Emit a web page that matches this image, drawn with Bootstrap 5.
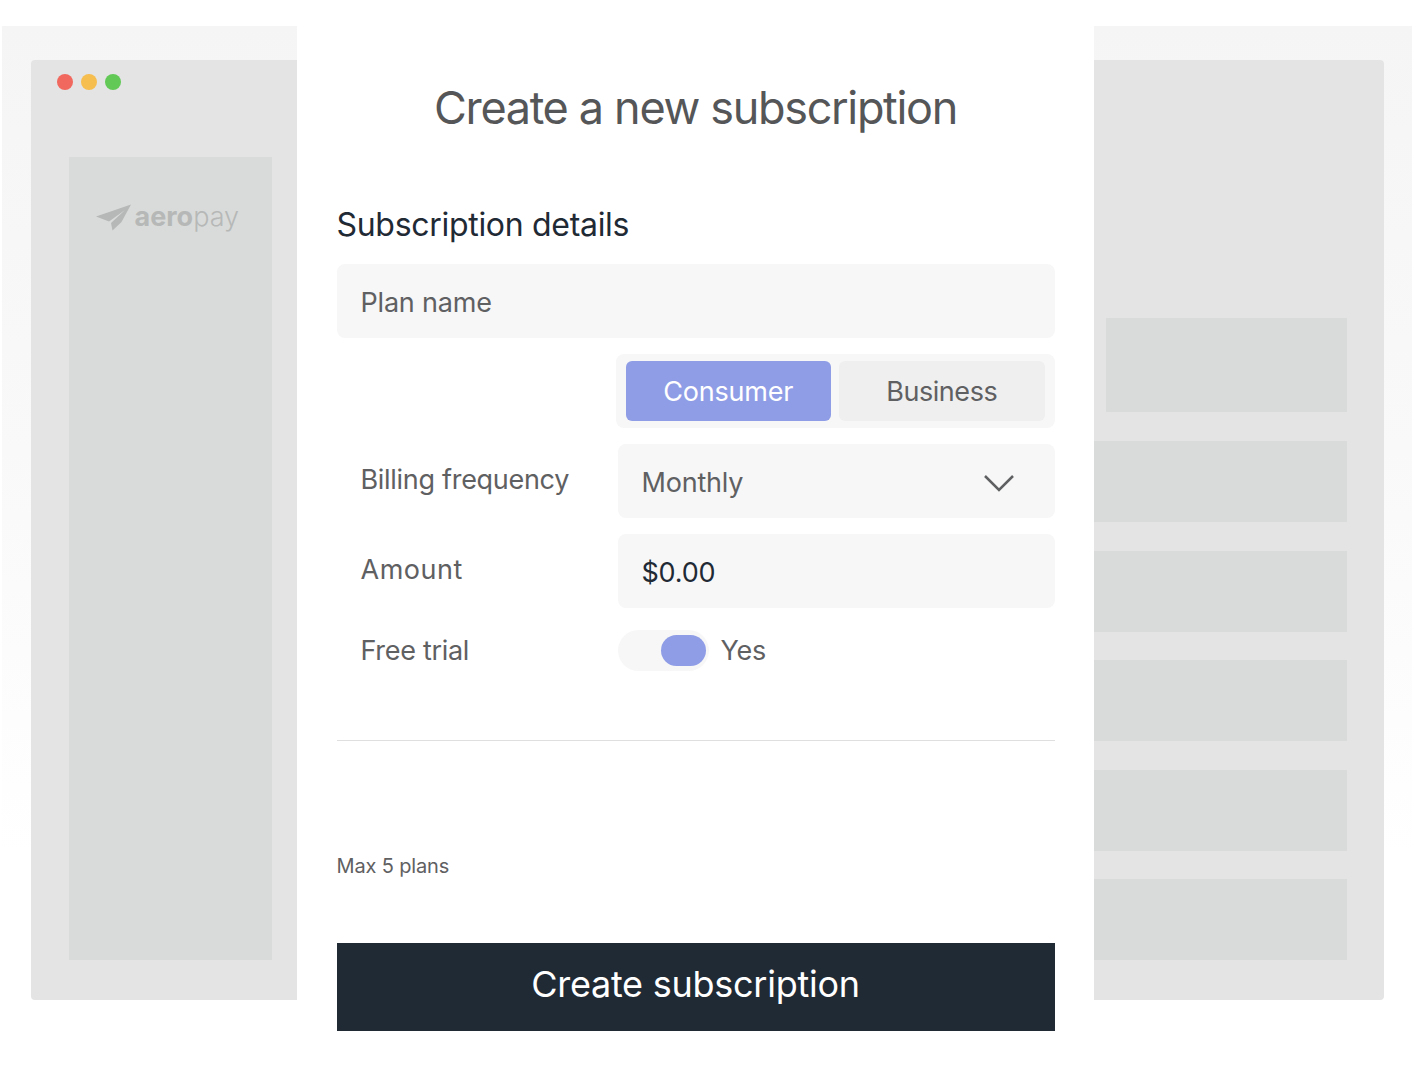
<!DOCTYPE html>
<html lang="en">
<head>
    <meta charset="UTF-8">
    <meta name="viewport" content="width=device-width, initial-scale=1.0">
    <title>Create a new subscription</title>
    <link href="https://cdn.jsdelivr.net/npm/bootstrap@5.3.0/dist/css/bootstrap.min.css" rel="stylesheet">
    <style>
        body {
            background-color: #fff;
            height: 1087px;
            overflow: hidden;
            font-family: "Inter", "Liberation Sans", sans-serif;
            color: #5f6062;
        }
        .side-left, .side-right {
            margin-top: 26px;
            padding-top: 34px;
            height: 1061px;
            background: linear-gradient(#f5f5f5, #f9f9f9 40%, #fff 78%);
        }
        .side-left { margin-left: 2px; width: 295px; padding-left: 29px; }
        .side-right { width: 318px; padding-right: 28px; }
        .win-left, .win-right { height: 940px; background-color: #e4e4e4; }
        .win-left { border-radius: 4px 0 0 4px; padding: 14px 25px 0 37.5px; position: relative; }
        .win-right { border-radius: 0 4px 4px 0; padding: 258px 37px 0 0; }
        .win-dots { position: absolute; left: 26px; top: 14px; }
        .win-dot { width: 16px; height: 16px; border-radius: 50%; }
        .sidebar-block {
            margin-top: 83px;
            height: 803px;
            background-color: #d9dbda;
            padding: 47px 0 0 27px;
        }
        .brand-word { font-size: 27px; line-height: 26px; color: #b6b8b7; letter-spacing: 0; margin-left: 3px; }
        .brand-word b { font-weight: 700; }
        .brand-word span { font-weight: 300; }
        .ghost-row { background-color: #d9dbda; height: 81px; margin-bottom: 28.5px; }
        .ghost-first { height: 94px; margin-left: 12px; margin-bottom: 29px; }
        .modal-panel { width: 797px; padding: 80px 39.5px 0; background-color: #fff; }
        .page-title { font-size: 45px; line-height: 55px; font-weight: 400; color: #555658; letter-spacing: -1.33px; margin: 0 0 70px; }
        .section-title { font-size: 32px; line-height: 40px; font-weight: 400; color: #1f2a35; letter-spacing: -.3px; margin: 0 0 19px; }
        .field-box.form-control {
            height: 74px;
            background-color: #f7f7f7;
            border: 0;
            border-radius: 8px;
            padding: 2px 24px 0;
            font-size: 27px;
            color: #5f6062;
            letter-spacing: -.2px;
        }
        .field-box.form-control::placeholder { color: #5f6062; opacity: 1; }
        .field-box.field-dark { color: #1f2a35; }
        .field-box.field-pick { padding-top: 4px; }
        .pick-arrow { margin-right: 16px; }
        .field-label { width: 281px; padding-left: 24px; font-size: 27px; letter-spacing: -.3px; line-height: 36px; flex-shrink: 0; }
        .label-raise { padding-bottom: 2px; }
        .label-wide { letter-spacing: .5px; }
        .seg-group { width: 439px; height: 74px; margin: 16px 0 16px auto; padding: 7px 10px; background-color: #f7f7f7; border-radius: 8px; }
        .seg-btn.btn { flex: 1; height: 60px; border: 0; border-radius: 6px; font-size: 27px; letter-spacing: -.2px; padding: 2px 0 0; }
        .seg-on.btn { background-color: #8f9de6; color: #fff; }
        .seg-off.btn { background-color: #efefef; color: #5f6062; letter-spacing: -.45px; }
        .trial-row { margin-top: 22px; }
        .pill-track { width: 91px; height: 41px; border-radius: 21px; background-color: #f7f7f7; padding: 5px 3px; }
        .pill-knob { width: 45px; height: 31px; border-radius: 16px; background-color: #8f9de6; }
        .rule-line { margin: 69px 0 0; border: 0; border-top: 1px solid #dfdfdf; opacity: 1; }
        .plan-note { font-size: 20px; line-height: 28px; letter-spacing: -.15px; margin: 111px 0 63px; }
        .create-btn.btn { height: 88px; background-color: #1f2a35; color: #fff; border: 0; font-size: 36px; letter-spacing: -.25px; padding: 0 0 6px; }
    </style>
</head>
<body>
    <div class="d-flex">
        <div class="side-left">
            <div class="win-left">
                <div class="win-dots d-flex gap-2">
                    <div class="win-dot" style="background-color:#f1685e"></div>
                    <div class="win-dot" style="background-color:#f6bd4f"></div>
                    <div class="win-dot" style="background-color:#62c956"></div>
                </div>
                <div class="sidebar-block">
                    <div class="d-flex align-items-start">
                        <svg width="36" height="27" viewBox="0 0 36 27" class="flex-shrink-0">
                            <path fill="#b6b8b7" d="M35 .5 0 12.500l13 5L29 6 15 19l1.500 7.500 9-8.500z"/>
                        </svg>
                        <div class="brand-word"><b>aero</b><span>pay</span></div>
                    </div>
                </div>
            </div>
        </div>

        <div class="modal-panel">
            <h1 class="page-title text-center">Create a new subscription</h1>
            <h2 class="section-title">Subscription details</h2>
            <form>
                <input type="text" class="form-control field-box" placeholder="Plan name">
                <div class="seg-group d-flex gap-2">
                    <button type="button" class="btn seg-btn seg-on">Consumer</button>
                    <button type="button" class="btn seg-btn seg-off">Business</button>
                </div>
                <div class="d-flex align-items-center mb-3">
                    <div class="field-label label-raise">Billing frequency</div>
                    <div class="form-control field-box field-pick d-flex align-items-center justify-content-between">
                        <span>Monthly</span>
                        <svg width="32" height="18" viewBox="0 0 32 18" class="pick-arrow">
                            <path d="M2 2l14 14L30 2" fill="none" stroke="#5f6062" stroke-width="2.500"/>
                        </svg>
                    </div>
                </div>
                <div class="d-flex align-items-center">
                    <div class="field-label label-raise label-wide">Amount</div>
                    <input type="text" class="form-control field-box field-dark" value="$0.00">
                </div>
                <div class="d-flex align-items-center trial-row">
                    <div class="field-label">Free trial</div>
                    <div class="pill-track d-flex justify-content-end"><div class="pill-knob"></div></div>
                    <div class="field-label ps-2 ms-1">Yes</div>
                </div>
                <hr class="rule-line">
                <div class="plan-note">Max 5 plans</div>
                <button type="button" class="btn create-btn w-100 rounded-0">Create subscription</button>
            </form>
        </div>

        <div class="side-right">
            <div class="win-right">
                <div class="ghost-row ghost-first"></div>
                <div class="ghost-row"></div>
                <div class="ghost-row"></div>
                <div class="ghost-row"></div>
                <div class="ghost-row"></div>
                <div class="ghost-row"></div>
            </div>
        </div>
    </div>
    <script src="https://cdn.jsdelivr.net/npm/bootstrap@5.3.0/dist/js/bootstrap.bundle.min.js"></script>
</body>
</html>
